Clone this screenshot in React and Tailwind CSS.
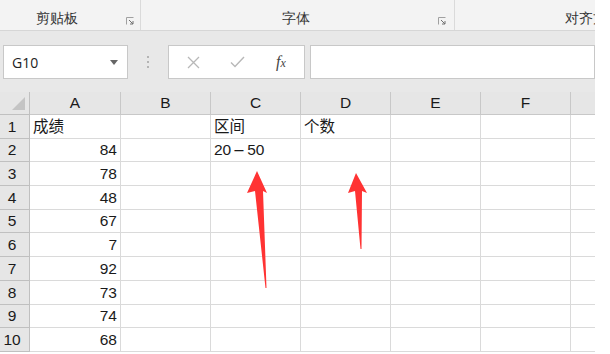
import React from 'react';

const cols = ['A', 'B', 'C', 'D', 'E', 'F', ''];
const colWidths = ['w-[91px]', 'w-[90px]', 'w-[90px]', 'w-[90px]', 'w-[90px]', 'w-[90px]', 'w-[90px]'];

const rows = [
  { A: '成绩', C: '区间', D: '个数' },
  { A: '84', C: '20-50' },
  { A: '78' },
  { A: '48' },
  { A: '67' },
  { A: '7' },
  { A: '92' },
  { A: '73' },
  { A: '74' },
  { A: '68' },
];

const isNum = (v) => /^\d+$/.test(v);

function CellText({ v }) {
  if (v.includes('-')) {
    const [a, b] = v.split('-');
    return (
      <>
        {a}
        <span className="mx-[1px] inline-block w-[14px] scale-x-[2.4] text-center">-</span>
        {b}
      </>
    );
  }
  return v;
}

function Launcher() {
  return (
    <svg width="8" height="8" viewBox="0 0 8 8" className="shrink-0">
      <path d="M0.5 7.5V0.5H7.5" fill="none" stroke="#a0a0a0" strokeWidth="1" />
      <path d="M3 3L7 7M7 4V7H4" fill="none" stroke="#707070" strokeWidth="1" />
    </svg>
  );
}

function Ribbon() {
  return (
    <div className="flex h-[31px] border-b border-[#d6d6d6] bg-[#f3f3f3] text-[14px] text-[#333]">
      <div className="relative flex w-[141px] shrink-0 items-center justify-center border-r border-[#dadada] pt-[5px] pr-[26px]">
        剪贴板
        <div className="absolute right-[6px] bottom-[5px]"><Launcher /></div>
      </div>
      <div className="relative flex w-[314px] shrink-0 items-center justify-center border-r border-[#dadada] pt-[5px] pr-[4px]">
        字体
        <div className="absolute right-[8px] bottom-[5px]"><Launcher /></div>
      </div>
      <div className="flex shrink-0 items-center whitespace-nowrap pl-[110px] pt-[5px]">对齐方式</div>
    </div>
  );
}

function FormulaBar() {
  return (
    <div className="flex h-[61px] items-start bg-[#e8e8e8] pt-[14px]">
      <div className="ml-[3px] flex h-[34px] w-[125px] shrink-0 items-center justify-between border border-[#c8c8c8] bg-white pl-[8px] pr-[9px] font-['Open_Sans',sans-serif] text-[14px] text-[#222]">
        G10
        <svg width="8" height="5" viewBox="0 0 8 5"><path d="M0 0H8L4 5Z" fill="#666" /></svg>
      </div>
      <div className="flex h-[34px] w-[40px] shrink-0 flex-col items-center justify-center gap-[3px]">
        <span className="h-[2px] w-[2px] bg-[#b4b4b4]" />
        <span className="h-[2px] w-[2px] bg-[#b4b4b4]" />
        <span className="h-[2px] w-[2px] bg-[#b4b4b4]" />
      </div>
      <div className="flex h-[34px] w-[137px] shrink-0 items-center border border-[#c8c8c8] bg-white">
        <div className="flex w-[44px] justify-center pl-[4px]">
          <svg width="13" height="13" viewBox="0 0 13 13"><path d="M1 1L12 12M12 1L1 12" stroke="#b8b8b8" strokeWidth="1.3" /></svg>
        </div>
        <div className="flex w-[48px] justify-center">
          <svg width="15" height="12" viewBox="0 0 15 12"><path d="M1 6.5L5 10.5L14 1" fill="none" stroke="#b8b8b8" strokeWidth="1.4" /></svg>
        </div>
        <div className="w-[40px] text-center font-['Liberation_Serif',serif] text-[16px] italic leading-none text-[#444]">
          f<span className="text-[12px]">x</span>
        </div>
      </div>
      <div className="ml-[5px] h-[34px] flex-1 border border-[#c8c8c8] bg-white" />
    </div>
  );
}

function Grid() {
  return (
    <div className="font-['Liberation_Sans','Noto_Sans_CJK_SC',sans-serif] text-[15.5px] text-[#1a1a1a]">
      <div className="flex h-[23px] bg-[#e6e6e6]">
        <div className="relative w-[30px] shrink-0 border-r border-b border-[#c0c0c0]">
          <svg width="13" height="13" viewBox="0 0 13 13" className="absolute right-[4px] bottom-[4px]">
            <path d="M13 0V13H0Z" fill="#c4c4c4" />
          </svg>
        </div>
        {cols.map((c, i) => (
          <div key={i} className={`${colWidths[i]} flex shrink-0 items-center justify-center border-r border-b border-[#c8c8c8]`}>
            {c}
          </div>
        ))}
      </div>
      {rows.map((r, ri) => (
        <div key={ri} className="flex h-[23.7px]">
          <div className="flex w-[30px] shrink-0 items-center justify-center border-r border-b border-[#c0c0c0] bg-[#e6e6e6] pr-[5px]">
            {ri + 1}
          </div>
          {cols.map((c, i) => {
            const v = r[c] || '';
            return (
              <div
                key={i}
                className={`${colWidths[i]} flex shrink-0 items-center whitespace-nowrap border-r border-b border-[#dadada] ${isNum(v) ? 'justify-end pr-[3px]' : 'pl-[3px]'}`}
              >
                <CellText v={v} />
              </div>
            );
          })}
        </div>
      ))}
    </div>
  );
}

export default function App() {
  return (
    <div className="relative h-[354px] w-[610px] overflow-hidden bg-white">
      <div className="w-[595px] overflow-hidden">
        <Ribbon />
        <FormulaBar />
        <Grid />
      </div>
      {/* red arrows drawn over the sheet */}
      <svg width="610" height="354" className="pointer-events-none absolute left-0 top-0">
        <polygon points="257,171 267,193 263,191 266.5,288 265.5,288 255,191 247,193" fill="#ff3333" />
        <polygon points="356,173 367,193 362,191 361.5,249 360.5,249 355,191 348,193" fill="#ff3333" />
      </svg>
    </div>
  );
}
